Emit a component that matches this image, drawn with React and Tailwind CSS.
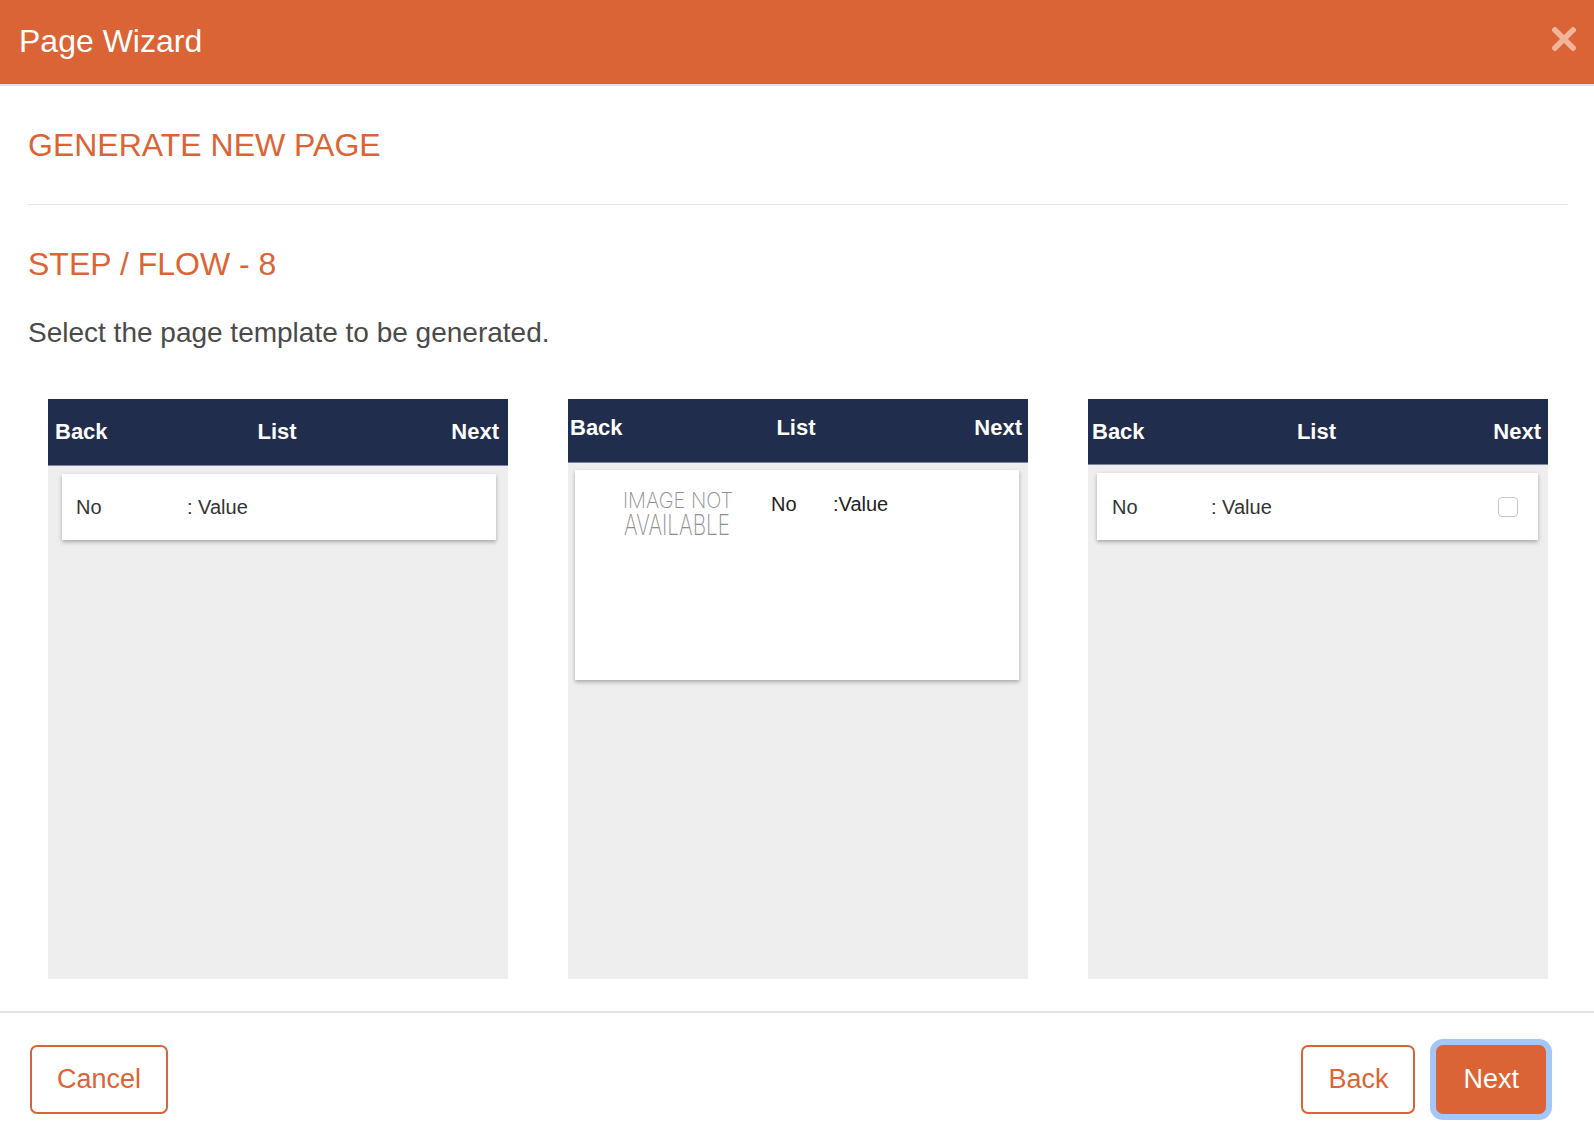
import React from 'react';

const font = { fontFamily: '"Liberation Sans", Arial, Helvetica, sans-serif' };

function CardHeader({ h, pl, pr, pb }) {
  return (
    <div className={`grid grid-cols-3 items-center bg-[#212d4c] border-b border-[#7c859c] text-white font-bold text-[22px] leading-none ${h} ${pl} ${pr} ${pb}`}>
      <span className="text-left">Back</span>
      <span className="text-center">List</span>
      <span className="text-right">Next</span>
    </div>
  );
}

function NoImage() {
  return (
    <svg width="120" height="46" viewBox="0 0 120 46" overflow="visible" className="shrink-0">
      <text x="0" y="15" fontSize="21" fontFamily="Inter, sans-serif" fontWeight="200" fill="#8e8e8e" textLength="110" lengthAdjust="spacingAndGlyphs">IMAGE NOT</text>
      <text x="1" y="42" fontSize="29" fontFamily="Inter, sans-serif" fontWeight="200" fill="#8e8e8e" textLength="106" lengthAdjust="spacingAndGlyphs">AVAILABLE</text>
    </svg>
  );
}

export default function App() {
  return (
    <div className="w-[1594px] h-[1142px] bg-white flex flex-col overflow-hidden" style={font}>
      {/* header */}
      <div className="h-[84px] bg-[#db6436] pl-[19px] pr-[18px] flex items-center justify-between shrink-0">
        <h1 className="text-white text-[32px] leading-none pb-[3px]">Page Wizard</h1>
        <svg width="24" height="24" viewBox="0 0 24 24" className="mb-[6px]">
          <path d="M3 3 L21 21 M21 3 L3 21" stroke="#f2b49a" strokeWidth="5.5" strokeLinecap="square" />
        </svg>
      </div>
      <div className="h-[2px] bg-[#dfe1e3] shrink-0" />

      {/* body */}
      <div className="pl-[28px] pr-[26px] pb-[32px]">
        <h2 className="mt-[43px] text-[#db6436] text-[32px] leading-none">GENERATE NEW PAGE</h2>
        <div className="mt-[43px] h-px bg-[#e5e7e9]" />
        <h3 className="mt-[43px] text-[#db6436] text-[32px] leading-none">STEP / FLOW - 8</h3>
        <p className="mt-[39px] text-[#4a4a4a] text-[28px] leading-none">Select the page template to be generated.</p>

        <div className="mt-[52px] pl-[20px] flex gap-[60px]">
          {/* card 1 */}
          <div className="w-[460px] h-[580px] bg-[#eeeeee] flex flex-col">
            <CardHeader h="h-[67px]" pl="pl-[7px]" pr="pr-[9px]" pb="pb-0" />
            <div className="mt-[8px] ml-[14px] mr-[12px] h-[66px] bg-white shadow-[0_2px_4px_rgba(0,0,0,0.3)] flex items-center pl-[14px] text-[20px] text-[#333]">
              <span className="w-[111px]">No</span>
              <span>: Value</span>
            </div>
          </div>

          {/* card 2 */}
          <div className="w-[460px] h-[580px] bg-[#eeeeee] flex flex-col">
            <CardHeader h="h-[64px]" pl="pl-[2px]" pr="pr-[6px]" pb="pb-[5px]" />
            <div className="mt-[7px] ml-[7px] mr-[9px] h-[210px] bg-white shadow-[0_2px_4px_rgba(0,0,0,0.3)] flex items-start pl-[48px] pt-[23px] text-[20px] text-[#222]">
              <NoImage />
              <span className="ml-[28px] w-[62px] mt-[1px] leading-none">No</span>
              <span className="mt-[1px] leading-none">:Value</span>
            </div>
          </div>

          {/* card 3 */}
          <div className="w-[460px] h-[580px] bg-[#eeeeee] flex flex-col">
            <CardHeader h="h-[66px]" pl="pl-[4px]" pr="pr-[7px]" pb="pb-0" />
            <div className="mt-[8px] ml-[9px] mr-[10px] h-[67px] bg-white shadow-[0_2px_4px_rgba(0,0,0,0.3)] flex items-center pl-[15px] pr-[20px] text-[20px] text-[#333]">
              <span className="w-[99px]">No</span>
              <span className="flex-1">: Value</span>
              <span className="w-[20px] h-[20px] rounded-[4px] border-[1.5px] border-[#c4c4c4] bg-white" />
            </div>
          </div>
        </div>
      </div>

      {/* footer */}
      <div className="border-t-2 border-[#dee2e6] pt-[32px] pl-[30px] pr-[48px] flex items-center justify-between">
        <button className="h-[69px] px-[25px] rounded-[7px] border-2 border-[#db6436] text-[#db6436] text-[27px] bg-white">
          Cancel
        </button>
        <div className="flex items-center gap-[21px]">
          <button className="h-[69px] px-[25px] rounded-[7px] border-2 border-[#db6436] text-[#db6436] text-[27px] bg-white">
            Back
          </button>
          <button className="h-[69px] px-[25px] rounded-[7px] border-2 border-[#db6436] bg-[#db6436] text-white text-[27px] ring-[6px] ring-[#a3c6fb]">
            Next
          </button>
        </div>
      </div>
    </div>
  );
}
